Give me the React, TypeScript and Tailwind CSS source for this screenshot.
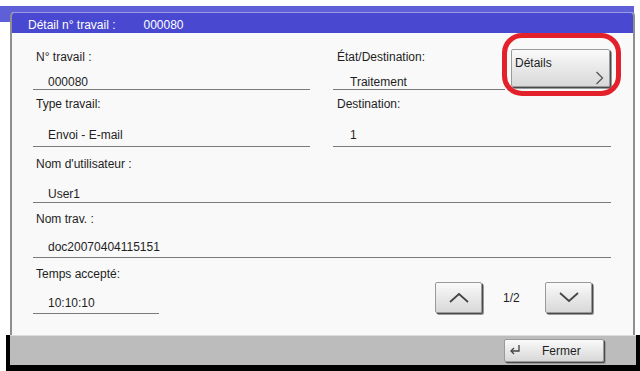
const Btn = ({ className, children }: { className: string; children?: React.ReactNode }) => (
  <div
    className={`rounded-[2px] border border-[#9a9a9a] bg-gradient-to-b from-[#fafafa] to-[#d8d8d8] shadow-[1px_1px_0_#4a4a4a,2px_2px_0_#9a9a9a] ${className}`}
  >
    {children}
  </div>
);

const Field = ({
  label,
  value,
  className,
  gap,
}: {
  label: string;
  value: string;
  className: string;
  gap: string;
}) => (
  <div className={`border-b border-[#7a7a7a] ${className}`}>
    <div className="h-[14px] pl-[3px] leading-[14px]">{label}</div>
    <div className={`h-[14px] pl-[15px] leading-[14px] ${gap}`}>{value}</div>
  </div>
);

export default function App() {
  return (
    <div className="relative h-[371px] w-[640px] overflow-hidden bg-white font-['Liberation_Sans',Arial,sans-serif] text-[12px] text-[#1e1e1e]">
      <div className="absolute left-0 top-[6px] h-[16px] w-[634px] bg-[#5f5fd8]" />

      <div className="relative flex flex-col pt-[12px]">
        <div className="ml-[10px] flex h-[323px] w-[625px] flex-col overflow-hidden rounded-t-[4px] border-x-2 border-t border-[#8f8f8f] border-t-[#9a9ae6] bg-[#f9f9f9]">
          <div className="flex h-[20px] bg-[#4848d0] pl-[16px] pt-[5px] leading-[14px] text-white">
            <span>Détail n° travail :</span>
            <span className="ml-[28px]">000080</span>
          </div>

          <div className="flex flex-col pl-[21px] pr-[22px]">
            <div className="flex gap-[23px]">
              <Field label="N° travail :" value="000080" className="w-[277px] pt-[17px]" gap="mt-[11px]" />
              <div className="flex w-[278px] gap-[6px]">
                <div className="w-[172px] border-b border-[#7a7a7a] pt-[17px]">
                  <div className="h-[14px] pl-[4px] leading-[14px]">État/Destination:</div>
                  <div className="mt-[11px] h-[14px] pl-[17px] leading-[14px]">Traitement</div>
                </div>
                <Btn className="relative mt-[16px] h-[38px] w-[99px]">
                  <span className="absolute left-[3px] top-[6px] leading-[14px]">Détails</span>
                  <svg className="absolute left-[83px] top-[21px]" width="9" height="14" viewBox="0 0 9 14">
                    <polyline points="1.5,1 7.5,7 1.5,13" fill="none" stroke="#555" strokeWidth="1.3" />
                  </svg>
                </Btn>
              </div>
            </div>

            <div className="flex gap-[23px]">
              <Field label="Type travail:" value="Envoi - E-mail" className="w-[277px] pb-[4px] pt-[7px]" gap="mt-[17px]" />
              <div className="w-[278px] border-b border-[#7a7a7a] pb-[4px] pt-[7px]">
                <div className="h-[14px] pl-[4px] leading-[14px]">Destination:</div>
                <div className="mt-[17px] h-[14px] pl-[17px] leading-[14px]">1</div>
              </div>
            </div>

            <Field label="Nom d'utilisateur :" value="User1" className="pb-[1px] pt-[10px]" gap="mt-[16px]" />
            <Field label="Nom trav. :" value="doc20070404115151" className="pb-[3px] pt-[9px]" gap="mt-[14px]" />

            <div className="flex">
              <Field label="Temps accepté:" value="10:10:10" className="w-[126px] pb-[3px] pt-[9px]" gap="mt-[15px]" />
              <div className="ml-auto mr-[19px] mt-[24px] flex h-[31px] items-center">
                <Btn className="flex h-[31px] w-[47px] items-center justify-center">
                  <svg width="20" height="11" viewBox="0 0 20 11">
                    <polyline points="1,10 10,2 19,10" fill="none" stroke="#444" strokeWidth="1.7" />
                  </svg>
                </Btn>
                <span className="ml-[21px] w-[42px] leading-[14px]">1/2</span>
                <Btn className="flex h-[31px] w-[47px] items-center justify-center">
                  <svg width="20" height="11" viewBox="0 0 20 11">
                    <polyline points="1,1 10,9 19,1" fill="none" stroke="#444" strokeWidth="1.7" />
                  </svg>
                </Btn>
              </div>
            </div>
          </div>
        </div>

        <div className="ml-[6px] h-[36px] bg-black">
          <div className="ml-[4px] flex h-[30px] w-[626px] border-t border-[#dcdcdc] bg-[#bcbcbc] pl-[494px] pt-[3px]">
            <Btn className="relative flex h-[23px] w-[100px] items-center">
              <svg className="absolute left-[4px] top-[4px]" width="12" height="11" viewBox="0 0 12 11">
                <path d="M10 1 V7 H2" fill="none" stroke="#444" strokeWidth="1.3" />
                <polyline points="5,4 2,7 5,10" fill="none" stroke="#444" strokeWidth="1.3" />
              </svg>
              <span className="ml-[37px] leading-[14px]">Fermer</span>
            </Btn>
          </div>
        </div>
      </div>

      <div className="absolute left-[502px] top-[33px] h-[63px] w-[119px] rounded-[20px] border-[5px] border-[#e3212b]" />
    </div>
  );
}
